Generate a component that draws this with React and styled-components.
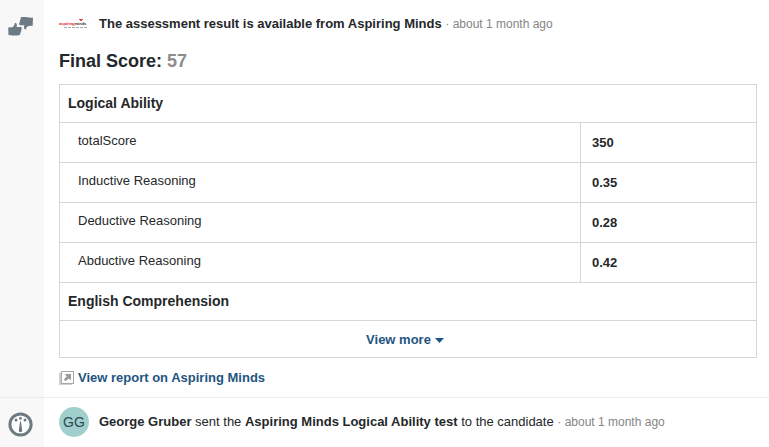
import React from "react";
import styled, { createGlobalStyle } from "styled-components";

const GlobalStyle = createGlobalStyle`
  *, *::before, *::after { box-sizing: border-box; }
  body {
    margin: 0;
    background: #fff;
    color: #25282a;
    font: 13px/20px "Liberation Sans", Arial, sans-serif;
  }
`;

const Feed = styled.main`
  display: flex;
  flex-direction: column;
  min-height: 100vh;
`;

const Event = styled.article`
  display: grid;
  grid-template-columns: 44px minmax(0, 1fr);
  border-top: ${(p) => (p.$divided ? "1px solid #ececec" : "0")};
  flex: ${(p) => (p.$divided ? "1" : "none")};
`;

const Rail = styled.div`
  background: #f8f8f8;
  padding: ${(p) => p.$top}px 0 0 8px;
  color: #6c7a83;

  svg { display: block; }
`;

const Body = styled.div`
  padding: 9px 12px 0 15px;
`;

const Headline = styled.header`
  display: flex;
  align-items: center;
  gap: 10px;
  min-height: 30px;
`;

const Message = styled.p`
  margin: 0;
`;

const Time = styled.time`
  color: #858585;
  font-size: 12px;
`;

const Avatar = styled.span`
  display: flex;
  align-items: center;
  justify-content: center;
  flex: none;
  width: 30px;
  height: 30px;
  border-radius: 50%;
  background: #a0cfcd;
  color: #2c4a50;
  font-size: 14px;
`;

const Score = styled.h2`
  margin: 10px 0;
  font-size: 18px;
  line-height: 25px;

  span { color: #8c8c8c; }
`;

const ResultTable = styled.table`
  width: 100%;
  border-collapse: collapse;
  table-layout: fixed;
  border: 1px solid #d6d6d6;
`;

const NameColumn = styled.col`
  width: auto;
`;

const ValueColumn = styled.col`
  width: 176px;
`;

const Section = styled.th`
  height: 38px;
  padding: 0 8px 2px;
  border: 1px solid #d6d6d6;
  text-align: left;
  font-size: 14px;
`;

const Name = styled.th`
  height: 40px;
  padding: 0 18px 4px;
  border: 1px solid #d6d6d6;
  text-align: left;
  font-weight: 400;
`;

const Value = styled.td`
  padding: 0 11px;
  border: 1px solid #d6d6d6;
  font-weight: 700;
`;

const MoreCell = styled.td`
  height: 37px;
  padding: 2px 6px 0 0;
  text-align: center;
`;

const MoreButton = styled.button`
  display: inline-flex;
  align-items: center;
  gap: 4px;
  padding: 0;
  border: 0;
  background: none;
  color: #1f5580;
  font: inherit;
  font-weight: 700;
  cursor: pointer;
`;

const ReportLink = styled.a`
  display: inline-flex;
  align-items: center;
  gap: 4px;
  margin: 10px 0 9px;
  color: #1f5580;
  font-weight: 700;
  text-decoration: none;
`;

const ThumbsIcon = () => (
  <svg width="26" height="20" viewBox="0 0 26 20" fill="currentColor" aria-hidden="true">
    <path d="M0.2 10.6 4.2 10.2C5.9 9.2 6.5 7.8 6.8 6.2C7.5 5.7 8.7 6.3 8.8 7.5L8.7 10H13.2C14 10.4 13.9 11.4 13.4 11.8C13.9 12.5 13.6 13.4 13 13.8C13.3 14.6 13 15.4 12.4 15.7C12.6 16.6 12.2 17.5 11.5 17.9L9.5 18.4H5L0.5 17.9Z" />
    <path d="M25 0.8 20.6 0.6 17.5 0H13.5C12.6 0.3 12.4 1.2 12.8 1.9C12.1 2.3 11.8 3.2 12.2 3.9C11.5 4.3 11.3 5.2 11.7 5.8C11 6.4 11 7.6 11.7 8.2L16.2 8.3L16 11C16.1 12.1 17.2 12.8 18 12.3C18.3 10.7 19 9.7 20.4 9L24.7 8.8Z" />
  </svg>
);

const GaugeIcon = () => (
  <svg width="25" height="25" viewBox="0 0 25 25" aria-hidden="true">
    <circle cx="12.5" cy="12.5" r="10.6" fill="#fff" stroke="currentColor" strokeWidth="3" />
    <g fill="currentColor">
      <circle cx="12.5" cy="6.4" r="1.4" />
      <circle cx="8" cy="8" r="1.5" />
      <circle cx="17" cy="8" r="1.5" />
      <path d="M12.1 9.3H12.9L14.2 18.5A1.7 1.7 0 0 1 10.8 18.5Z" />
    </g>
  </svg>
);

const BrandLogo = () => (
  <svg width="30" height="12" viewBox="0 0 30 12" role="img" aria-label="aspiringminds">
    <text x="0" y="7" fontSize="4" fontWeight="700" fontFamily="Liberation Sans, sans-serif" fill="#e3262e">
      aspiring<tspan fill="#3a3033">minds</tspan>
    </text>
    <path d="M20 1h4v1h-1v1h-2V2h-1z" fill="#e34a50" />
    <path d="M5 9.5H29" stroke="#aaa" strokeDasharray="3 1" />
  </svg>
);

const ReportIcon = () => (
  <svg width="15" height="14" viewBox="0 0 15 14" aria-hidden="true">
    <path d="M0 1.5H2.5V11.5H13V14H0Z" fill="#cfcfcf" />
    <rect x="2.5" y="0.5" width="12" height="12" fill="#fff" stroke="#a8a8a8" />
    <path d="M5.5 3H12V9.5L9.9 7.4L6.7 10.3L4.8 8.4L7.8 5.3Z" fill="#9c9c9c" />
  </svg>
);

const CaretIcon = () => (
  <svg width="9" height="5" viewBox="0 0 9 5" aria-hidden="true">
    <path d="M0 0H9L4.5 5Z" fill="currentColor" />
  </svg>
);

const results = [
  ["totalScore", "350"],
  ["Inductive Reasoning", "0.35"],
  ["Deductive Reasoning", "0.28"],
  ["Abductive Reasoning", "0.42"],
];

export default function App() {
  return (
    <>
      <GlobalStyle />
      <Feed>
        <Event>
          <Rail $top={17}><ThumbsIcon /></Rail>
          <Body>
            <Headline>
              <BrandLogo />
              <Message>
                <strong>The assessment result is available from Aspiring Minds</strong>{" "}
                <Time>· about 1 month ago</Time>
              </Message>
            </Headline>
            <Score>Final Score: <span>57</span></Score>
            <ResultTable>
              <colgroup><NameColumn /><ValueColumn /></colgroup>
              <tbody>
                <tr><Section colSpan={2} scope="colgroup">Logical Ability</Section></tr>
                {results.map(([name, value]) => (
                  <tr key={name}>
                    <Name scope="row">{name}</Name>
                    <Value>{value}</Value>
                  </tr>
                ))}
                <tr><Section colSpan={2} scope="colgroup">English Comprehension</Section></tr>
              </tbody>
              <tfoot>
                <tr>
                  <MoreCell colSpan={2}>
                    <MoreButton type="button">View more <CaretIcon /></MoreButton>
                  </MoreCell>
                </tr>
              </tfoot>
            </ResultTable>
            <ReportLink href="#report"><ReportIcon />View report on Aspiring Minds</ReportLink>
          </Body>
        </Event>
        <Event $divided>
          <Rail $top={14}><GaugeIcon /></Rail>
          <Body>
            <Headline>
              <Avatar>GG</Avatar>
              <Message>
                <strong>George Gruber</strong> sent the{" "}
                <strong>Aspiring Minds Logical Ability test</strong> to the candidate{" "}
                <Time>· about 1 month ago</Time>
              </Message>
            </Headline>
          </Body>
        </Event>
      </Feed>
    </>
  );
}
